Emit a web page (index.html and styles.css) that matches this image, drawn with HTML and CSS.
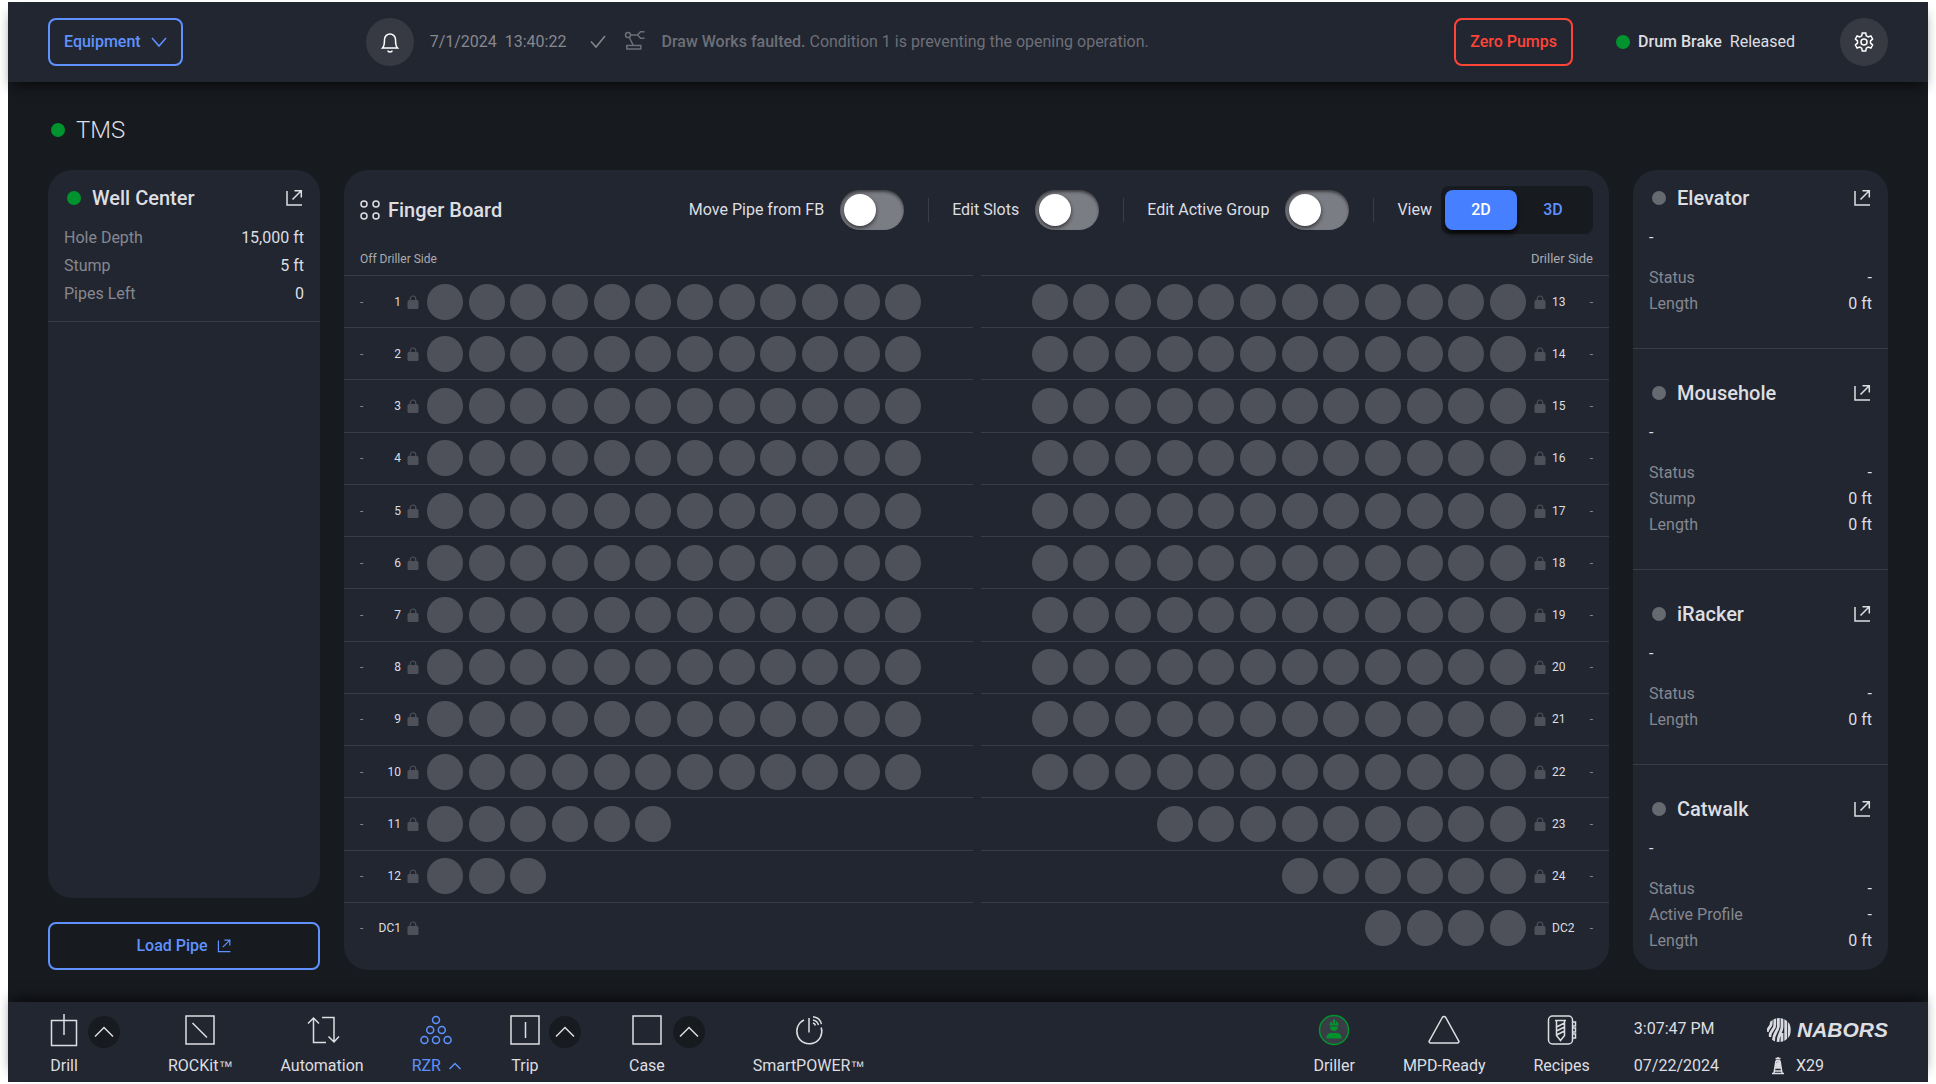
FILE: index.html
```html
<!DOCTYPE html>
<html lang="en">
<head>
<meta charset="utf-8">
<meta name="viewport" content="width=device-width, initial-scale=1">
<title>TMS – Finger Board</title>
<link rel="stylesheet" href="styles.css">
<script src="board.js" defer></script>
</head>
<body>
<svg class="sprite" aria-hidden="true">
  <symbol id="i-open" viewBox="0 0 20 20"><path d="M3 3v14h15M8.500 11.500L17 3M10.500 2.700h6.800v6.800"/></symbol>
  <symbol id="i-up" viewBox="0 0 20 20"><path d="M1 14.500l9-9 9 9"/></symbol>
  <symbol id="i-down" viewBox="0 0 16 16"><path d="M1 4l7 8 7-8"/></symbol>
  <symbol id="i-lock" viewBox="0 0 12 14"><path d="M3.200 6V4a2.800 3 0 0 1 5.600 0v2" fill="none" stroke="currentColor" stroke-width="1.200"/><rect x="0.500" y="5" width="11" height="9" rx="1.500" fill="currentColor"/></symbol>
</svg>
<div class="app">
  <header class="topbar">
    <button class="btn btn-equipment" type="button">Equipment <svg class="icon s16"><use href="#i-down"/></svg></button>
    <div class="alert">
      <button class="round" type="button" aria-label="Notifications"><svg class="icon s24" viewBox="0 0 24 24"><path d="M4.500 18c2-2 2-4 2-8.500a5.500 5.500 0 0 1 11 0c0 4.500 0 6.500 2 8.500z"/><path d="M10 20.500a2 1.500 0 0 0 4 0"/></svg></button>
      <time class="stamp">7/1/2024&nbsp; 13:40:22</time>
      <svg class="icon s16 check" viewBox="0 0 16 16"><path d="M1 7.500l5 5.500L15 2"/></svg>
      <svg class="icon s24 robot" viewBox="0 0 24 24"><circle cx="6" cy="5" r="2.500"/><path d="M8.500 5h7M22.500 1.800h-4L15.500 5l3 3.200h4M7.300 7.500l4 8M4.800 15.500h14v3.500h-14z"/></svg>
      <p><strong>Draw Works faulted.</strong> Condition 1 is preventing the opening operation.</p>
    </div>
    <button class="btn btn-danger" type="button">Zero Pumps</button>
    <p class="brake"><span class="dot dot-on"></span><strong>Drum Brake</strong><span>Released</span></p>
    <button class="round" type="button" aria-label="Settings"><svg class="icon s24" viewBox="0 0 24 24"><path d="M10.300 2.500h3.400l.6 2.800 1.900 1.100 2.700-.9 1.700 3-2.100 1.900v2.200l2.100 1.900-1.700 3-2.700-.9-1.900 1.100-.6 2.800h-3.400l-.6-2.800-1.900-1.100-2.700.9-1.700-3 2.100-1.900v-2.200L3.400 8.500l1.700-3 2.700.9 1.900-1.100z" transform="translate(0 .5)"/><circle cx="12" cy="12" r="3"/></svg></button>
  </header>

  <main class="page">
    <h1 class="page-title"><span class="dot dot-on"></span>TMS</h1>
    <div class="columns">
      <div class="left">
        <section class="card well">
          <div class="well-body">
            <header class="card-head"><span class="dot dot-on"></span><h2>Well Center</h2><a href="#well" aria-label="Open Well Center"><svg class="icon s20"><use href="#i-open"/></svg></a></header>
            <dl class="facts facts-wide">
              <div><dt>Hole Depth</dt><dd>15,000 ft</dd></div>
              <div><dt>Stump</dt><dd>5 ft</dd></div>
              <div><dt>Pipes Left</dt><dd>0</dd></div>
            </dl>
          </div>
        </section>
        <button class="btn btn-load" type="button">Load Pipe <svg class="icon s16"><use href="#i-open"/></svg></button>
      </div>

      <section class="card board">
        <header class="board-head">
          <svg class="icon s20" viewBox="0 0 20 20"><circle cx="4" cy="4" r="3"/><circle cx="16" cy="4" r="3"/><circle cx="4" cy="16" r="3"/><circle cx="16" cy="16" r="3"/></svg>
          <h2>Finger Board</h2>
          <div class="controls">
            <label class="switch">Move Pipe from FB <input type="checkbox" role="switch"></label>
            <label class="switch">Edit Slots <input type="checkbox" role="switch"></label>
            <label class="switch">Edit Active Group <input type="checkbox" role="switch"></label>
            <div class="view"><span>View</span>
              <div class="segments"><button type="button" aria-pressed="true">2D</button><button type="button" aria-pressed="false">3D</button></div>
            </div>
          </div>
        </header>
        <div class="sides"><span class="side-off">Off Driller Side</span><span>Driller Side</span></div>
        <div class="racks">
          <ol class="rack" id="rack-off"></ol>
          <ol class="rack rack-driller" id="rack-driller"></ol>
        </div>
      </section>

      <aside class="card machines">
        <section>
          <header class="card-head"><span class="dot"></span><h2>Elevator</h2><a href="#elevator" aria-label="Open Elevator"><svg class="icon s20"><use href="#i-open"/></svg></a></header>
          <p class="item">-</p>
          <dl class="facts"><div><dt>Status</dt><dd>-</dd></div><div><dt>Length</dt><dd>0 ft</dd></div></dl>
        </section>
        <section>
          <header class="card-head"><span class="dot"></span><h2>Mousehole</h2><a href="#mousehole" aria-label="Open Mousehole"><svg class="icon s20"><use href="#i-open"/></svg></a></header>
          <p class="item">-</p>
          <dl class="facts"><div><dt>Status</dt><dd>-</dd></div><div><dt>Stump</dt><dd>0 ft</dd></div><div><dt>Length</dt><dd>0 ft</dd></div></dl>
        </section>
        <section>
          <header class="card-head"><span class="dot"></span><h2>iRacker</h2><a href="#iracker" aria-label="Open iRacker"><svg class="icon s20"><use href="#i-open"/></svg></a></header>
          <p class="item">-</p>
          <dl class="facts"><div><dt>Status</dt><dd>-</dd></div><div><dt>Length</dt><dd>0 ft</dd></div></dl>
        </section>
        <section>
          <header class="card-head"><span class="dot"></span><h2>Catwalk</h2><a href="#catwalk" aria-label="Open Catwalk"><svg class="icon s20"><use href="#i-open"/></svg></a></header>
          <p class="item">-</p>
          <dl class="facts"><div><dt>Status</dt><dd>-</dd></div><div><dt>Active Profile</dt><dd>-</dd></div><div><dt>Length</dt><dd>0 ft</dd></div></dl>
        </section>
      </aside>
    </div>
  </main>

  <footer class="bottombar">
    <nav class="nav">
      <div class="nav-group">
        <a class="nav-item" href="#drill"><svg class="icon s32" viewBox="0 0 32 32"><path d="M3.500 6.500h25v25h-25zM16 0v21"/></svg>Drill</a>
        <button class="more" type="button" aria-label="More Drill"><svg class="icon s20"><use href="#i-up"/></svg></button>
      </div>
      <a class="nav-item" href="#rockit"><svg class="icon s32" viewBox="0 0 32 32"><path d="M2 2h28v28H2zM8.500 9l14.500 14.500"/></svg><span>ROCKit<span class="tm">™</span></span></a>
      <a class="nav-item" href="#automation"><svg class="icon s32" viewBox="0 0 32 32"><path d="M20 28.500H7.500V4M2 9.500L7.500 4l5.500 5.500M16 3.500h12V28M22.500 22.500L28 28l5-5.500"/></svg>Automation</a>
      <a class="nav-item current" href="#rzr"><svg class="icon s32" viewBox="0 0 32 32"><circle cx="16" cy="6" r="3.500"/><circle cx="10.200" cy="16" r="3.500"/><circle cx="21.800" cy="16" r="3.500"/><circle cx="4.400" cy="26" r="3.500"/><circle cx="16" cy="26" r="3.500"/><circle cx="27.600" cy="26" r="3.500"/></svg><span class="with-caret">RZR <svg class="icon s12" viewBox="0 0 12 12"><path d="M0.500 9L6 3.500 11.500 9"/></svg></span></a>
      <div class="nav-group">
        <a class="nav-item" href="#trip"><svg class="icon s32" viewBox="0 0 32 32"><path d="M2 2h28v28H2zM16.500 8v16"/></svg>Trip</a>
        <button class="more" type="button" aria-label="More Trip"><svg class="icon s20"><use href="#i-up"/></svg></button>
      </div>
      <div class="nav-group">
        <a class="nav-item" href="#case"><svg class="icon s32" viewBox="0 0 32 32"><path d="M2 2h28v28H2z"/></svg>Case</a>
        <button class="more" type="button" aria-label="More Case"><svg class="icon s20"><use href="#i-up"/></svg></button>
      </div>
      <a class="nav-item" href="#smartpower"><svg class="icon s32" viewBox="0 0 32 32"><path d="M11 6a12.500 12.500 0 1 0 17.200 7.500M16 4v14.500"/><path d="M20 9a4 4 0 0 1 2.500 2.500M20 6a7 7 0 0 1 5.500 5M20 2.800c4 .4 7.500 3.200 8.400 7.400" /></svg><span>SmartPOWER<span class="tm">™</span></span></a>
    </nav>
    <nav class="nav">
      <a class="nav-item" href="#driller"><svg class="icon s32" viewBox="0 0 32 32"><circle cx="16" cy="16" r="14.500" fill="#3a3d46" stroke="#00932e"/><path d="M11.500 11.500c0-2.500 1-3.700 2.500-4.500v2.500h1V5.500h2v4h1V7c1.500.8 2.500 2 2.500 4.500zM12 12.500h8c0 2.800-1.800 4.500-4 4.500s-4-1.700-4-4.500zM8.500 24.500c0-4 2-5.500 5-5.500h5c3 0 5 1.500 5 5.500z" fill="#00932e" stroke="none"/></svg>Driller</a>
      <a class="nav-item" href="#mpd"><svg class="icon s32" viewBox="0 0 32 32"><path d="M14.300 3.500L1.500 26.500a1.500 1.500 0 0 0 1.300 2.500h26.400a1.500 1.500 0 0 0 1.300-2.500L17.700 3.500a2 2 0 0 0-3.400 0z"/></svg>MPD-Ready</a>
      <a class="nav-item" href="#recipes"><svg class="icon s32" viewBox="0 0 32 32"><rect x="2.500" y="2" width="24" height="28" rx="4"/><path d="M9 6.500h11M10.500 7v14.500l4 5 4-5V7M10.500 13l8-4M10.500 17l8-4M10.500 21l8-4M27 8h2.500v4H27M27 14h2.500v4H27M27 20h2.500v4H27"/></svg>Recipes</a>
      <div class="clock"><time>3:07:47 PM</time><time>07/22/2024</time></div>
      <div class="brand">
        <div class="logo"><svg class="globe" viewBox="0 0 24 24"><defs><clipPath id="globe"><circle cx="12" cy="12" r="12"/></clipPath></defs><g clip-path="url(#globe)" fill="none" stroke="#d9dbe0" stroke-width="2.800"><path d="M15 0v9c0 5-4 7-4 15M18.700 0v24M22.300 0v24M11.400 0v8c0 5-5 6-5 16M7.800 0v7c0 5-5 5-5 12M4.200 0v6c0 3-4 4-4 8M15 15v10"/></g></svg><span>NABORS</span></div>
        <div class="rig"><svg class="icon s18" viewBox="0 0 18 18"><path d="M6.500 1.500h5M9 0v2M7 3.500h4M7 3.500L5 16M11 3.500L13 16M6.500 7.500h5M6 11h6M5.500 14h7M7 4l4.500 3.500M11 4L6.500 7.500M6.500 8l5.500 3M11.500 8L6 11M3 16.500h12"/></svg>X29</div>
      </div>
    </nav>
  </footer>
</div>
</body>
</html>
```

FILE: styles.css
```css
:root {
  --page: #171a1f;
  --card: #222630;
  --line: #3a3d47;
  --text: #dddee2;
  --muted: #868890;
  --dim: #6d6f78;
  --slot: #4f515a;
  --blue: #5f92ff;
  --green: #00932e;
  --red: #ff4438;
}

* { box-sizing: border-box; }

body {
  margin: 0;
  padding: 2px 8px;
  background: #fff;
  color: var(--text);
  font: 16px/20px Roboto, "Liberation Sans", sans-serif;
}

h1, h2, p, dl, dd, ol { margin: 0; padding: 0; }
h2 { font-size: 20px; line-height: 24px; font-weight: 500; }
strong { font-weight: 500; }
a { color: inherit; text-decoration: none; }
button { font: inherit; color: inherit; border: 0; background: none; cursor: pointer; }

.sprite { position: absolute; width: 0; height: 0; }
.icon { flex: none; fill: none; stroke: currentColor; stroke-width: 1.5; }
.s12 { width: 12px; height: 12px; }
.s16 { width: 16px; height: 16px; }
.s18 { width: 18px; height: 18px; }
.s20 { width: 20px; height: 20px; }
.s24 { width: 24px; height: 24px; }
.s32 { width: 32px; height: 32px; overflow: visible; }

.dot {
  flex: none;
  width: 14px;
  height: 14px;
  margin: 0 3px;
  border-radius: 50%;
  background: #676971;
}
.dot-on { background: var(--green); }

.app {
  display: flex;
  flex-direction: column;
  min-height: calc(100vh - 4px);
  background: var(--page);
}

.topbar {
  display: flex;
  align-items: center;
  min-height: 80px;
  padding: 0 40px;
  background: var(--card);
  box-shadow: 0 8px 12px -4px rgba(0, 0, 0, 0.6);
}

.btn {
  display: flex;
  align-items: center;
  justify-content: center;
  gap: 8px;
  height: 48px;
  padding: 0 14px;
  border: 2px solid var(--blue);
  border-radius: 8px;
  color: var(--blue);
  font-weight: 500;
}
.btn-equipment { gap: 10px; }
.btn-danger { border-color: var(--red); color: var(--red); }
.btn-load { width: 100%; }

.round {
  display: grid;
  place-items: center;
  width: 48px;
  height: 48px;
  padding: 0;
  border-radius: 50%;
  background: #373a43;
  color: #fff;
}

.alert {
  flex: 1;
  display: flex;
  align-items: center;
  margin-left: 183px;
  color: var(--dim);
}
.stamp { margin-left: 16px; color: var(--muted); }
.check { margin: 0 16px 0 24px; color: var(--muted); }
.robot { margin-right: 15px; }

.brake { display: flex; align-items: center; gap: 8px; margin: 0 45px 0 40px; }
.brake .dot { margin-right: 0; }

.page { flex: 1; display: flex; flex-direction: column; padding: 32px 40px; }

.page-title {
  display: flex;
  align-items: center;
  gap: 8px;
  margin-bottom: 24px;
  font-size: 24px;
  line-height: 32px;
  font-weight: 300;
}

.columns {
  flex: 1;
  display: grid;
  grid-template-columns: 272px minmax(0, 1fr) 255px;
  gap: 24px;
}

.card { border-radius: 24px; background: var(--card); }

.left { display: flex; flex-direction: column; gap: 24px; }
.well { flex: 1; }
.well-body { padding: 16px 16px 13px; border-bottom: 1px solid var(--line); }

.card-head { display: flex; align-items: center; gap: 8px; height: 24px; }
.card-head a { display: flex; margin-left: auto; }

.facts > div { display: flex; justify-content: space-between; line-height: 26px; }
.facts dt { color: var(--muted); }
.facts-wide { margin-top: 14px; }
.facts-wide > div { line-height: 28px; }

.machines section { padding: 32px 16px 31px; border-bottom: 1px solid var(--line); }
.machines section:first-child { padding-top: 16px; }
.machines section:last-child { padding-bottom: 15px; border-bottom: 0; }
.item { margin: 15px 0 14px; line-height: 26px; }

.board { display: flex; flex-direction: column; padding-bottom: 16px; }
.board-head { display: flex; align-items: center; gap: 8px; padding: 16px 16px 0; }
.controls { display: flex; align-items: center; margin-left: auto; }

.switch {
  display: flex;
  align-items: center;
  gap: 16px;
}
.switch::after {
  content: "";
  width: 1px;
  height: 24px;
  margin: 0 23px 0 8px;
  background: var(--line);
}
.switch input {
  appearance: none;
  width: 64px;
  height: 40px;
  margin: 0;
  padding: 4px;
  border-radius: 20px;
  background: #7b7d84;
  box-shadow: inset 0 2px 3px rgba(0, 0, 0, 0.5);
}
.switch input::before {
  content: "";
  display: block;
  width: 32px;
  height: 32px;
  border-radius: 50%;
  background: #fff;
  box-shadow: 0 2px 4px rgba(0, 0, 0, 0.6);
}
.switch input:checked::before { margin-left: auto; }

.view { display: flex; align-items: center; gap: 9px; }
.segments { display: flex; padding: 4px; border-radius: 8px; background: var(--page); }
.segments button {
  width: 72px;
  height: 40px;
  padding: 0;
  border-radius: 8px;
  color: var(--blue);
  font-weight: 500;
}
.segments [aria-pressed="true"] {
  background: #467fff;
  color: #fff;
  box-shadow: 0 4px 4px rgba(0, 0, 0, 0.7);
}

.sides {
  display: flex;
  justify-content: space-between;
  align-items: center;
  height: 41px;
  padding: 8px 16px 0;
  color: #a9abb1;
  font-size: 13px;
}
.side-off { font-size: 12px; }

.racks { flex: 1; display: grid; grid-template-columns: 1fr 1fr; gap: 8px; }
.rack { display: grid; grid-auto-rows: minmax(44px, 1fr); list-style: none; font-size: 12px; }
.row {
  display: flex;
  align-items: center;
  padding: 0 16px;
  border-top: 1px solid var(--line);
}
.rack-driller .row { flex-direction: row-reverse; }
.tag { display: flex; justify-content: space-between; width: 41px; }
.rack-driller .tag { flex-direction: row-reverse; }
.tag i { font-style: normal; color: var(--muted); }
.lock { width: 12px; height: 14px; margin: 0 8px 0 6px; color: var(--slot); }
.rack-driller .lock { margin: 0 6px 0 8px; }
.slots {
  display: grid;
  grid-template-columns: repeat(12, 1fr);
  width: 500px;
}
.rack-driller .slots { direction: rtl; }
.slots span { width: 36px; height: 36px; border-radius: 50%; background: var(--slot); }

.bottombar {
  display: flex;
  justify-content: space-between;
  min-height: 80px;
  padding: 12px 40px 0;
  background: var(--card);
  box-shadow: 0 -8px 12px -4px rgba(0, 0, 0, 0.6);
}
.nav { display: flex; align-items: flex-start; gap: 48px; }
.nav-group { display: flex; align-items: flex-start; gap: 8px; }
.nav-item { display: flex; flex-direction: column; align-items: center; gap: 10px; }
.tm { font: 14px/1 "Liberation Sans", Arial, sans-serif; }
.current { color: var(--blue); }
.with-caret { display: flex; align-items: center; gap: 8px; }
.more {
  display: grid;
  place-items: center;
  width: 32px;
  height: 32px;
  margin-top: 2px;
  padding: 0;
  border-radius: 50%;
  background: var(--page);
}
.clock { display: flex; flex-direction: column; gap: 17px; margin-left: -4px; padding-top: 5px; }
.brand { display: flex; flex-direction: column; gap: 14px; padding-top: 4px; }
.logo {
  display: flex;
  align-items: center;
  gap: 6px;
  font: italic bold 21px/24px "Liberation Sans", Arial, sans-serif;
}
.globe { width: 24px; height: 24px; }
.rig { display: flex; align-items: center; gap: 9px; padding-left: 2px; }
```

FILE: board.js
```js
// Number of pipe slots in each row of the finger board.
const offDriller = [
  ["1", 12], ["2", 12], ["3", 12], ["4", 12], ["5", 12], ["6", 12], ["7", 12],
  ["8", 12], ["9", 12], ["10", 12], ["11", 6], ["12", 3], ["DC1", 0],
];
const driller = [
  ["13", 12], ["14", 12], ["15", 12], ["16", 12], ["17", 12], ["18", 12], ["19", 12],
  ["20", 12], ["21", 12], ["22", 12], ["23", 9], ["24", 6], ["DC2", 4],
];

function fill(id, rows) {
  document.getElementById(id).innerHTML = rows.map(([name, count]) => `
    <li class="row">
      <div class="tag"><i>-</i><span>${name}</span></div>
      <svg class="lock" aria-label="Locked"><use href="#i-lock"/></svg>
      <div class="slots">${"<span></span>".repeat(count)}</div>
    </li>`).join("");
}

fill("rack-off", offDriller);
fill("rack-driller", driller);
```
